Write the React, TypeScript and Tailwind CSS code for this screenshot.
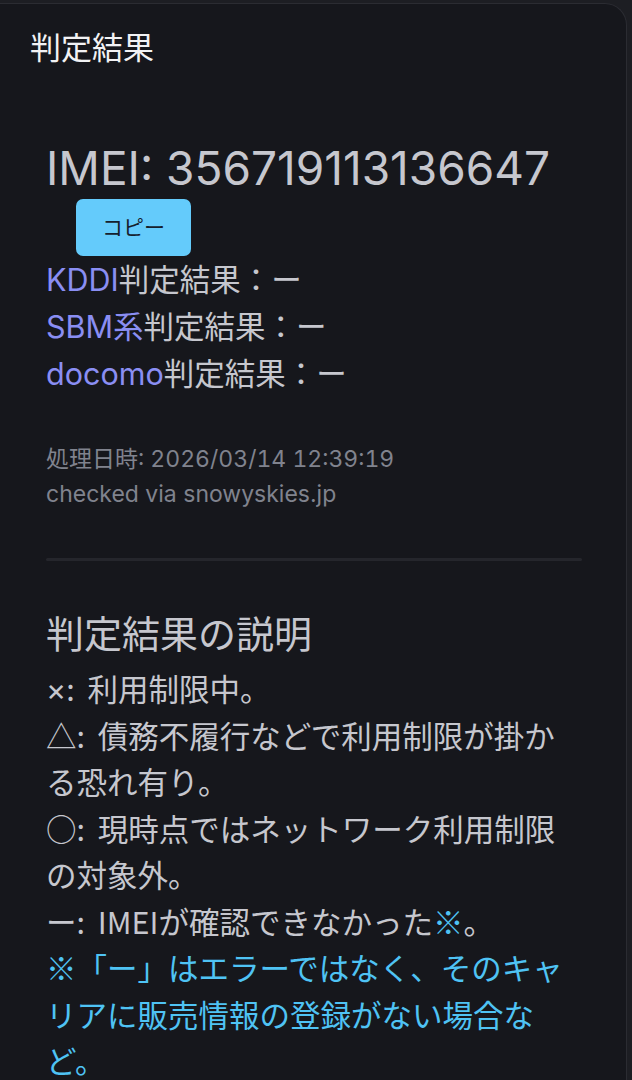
const cjk = { fontFamily: '"Noto Sans CJK JP", sans-serif' };
const latin = { fontFamily: 'Inter, "Noto Sans CJK JP", sans-serif' };

function Mark({ s, narrow = false }: { s: string; narrow?: boolean }) {
  // 記号 + コロン
  return (
    <span className="pr-[6px]">
      {narrow ? (
        <span className="leading-none" style={latin}>{s}</span>
      ) : (
        s
      )}
      :{' '}
    </span>
  );
}

export default function App() {
  return (
    <div className="min-h-screen bg-[#1d1e23] pt-[3px] pr-[5px] overflow-hidden" style={latin}>
      <div className="min-h-[1077px] bg-[#16171c] rounded-tr-[22px] border-t border-r border-[#2b2c32]">
        {/* タイトル */}
        <div className="pl-[30px] pt-[21px] text-[31px] leading-[45px] text-[#f2f2f4]">判定結果</div>

        <div className="px-[46px]">
          <div className="mt-[71px] text-[46px] leading-[55px] text-[#c6c7ce]">IMEI: 356719113136647</div>
          <button className="mt-[3px] ml-[30px] w-[115px] h-[57px] rounded-[7px] bg-[#64cbfb] text-[21px] text-[#15202d]">
            コピー
          </button>

          <div className="text-[30.5px] leading-[47px] text-[#c6c7ce]">
            <div><span className="text-[#8a8ef3]">KDDI</span>判定結果：ー</div>
            <div><span className="text-[#8a8ef3]">SBM系</span>判定結果：ー</div>
            <div><span className="text-[#8a8ef3]">docomo</span>判定結果：ー</div>
          </div>

          <div className="mt-[45px] text-[23px] leading-[35px] text-[#80838e]">
            <div className="tabular-nums">処理日時: 2026/03/14 12:39:19</div>
            <div>checked via snowyskies.jp</div>
          </div>

          <div className="mt-[46px] h-[3px] w-[536px] bg-[#25262c] rounded-full" />

          <h2 className="mt-[47px] text-[38px] leading-[52px] text-[#c6c7ce]">判定結果の説明</h2>
          <div className="mt-[5px] text-[30.5px] leading-[46.5px] text-[#c6c7ce] w-[534px]" style={cjk}>
            <div><Mark s="×" narrow />利用制限中。</div>
            <div><Mark s="△" />債務不履行などで利用制限が掛かる恐れ有り。</div>
            <div><Mark s="○" />現時点ではネットワーク利用制限の対象外。</div>
            <div>
              <Mark s="ー" />IMEIが確認できなかった<span className="text-[#4fc3f4]">※</span>。
            </div>
            <div className="text-[#4fc3f4]">
              ※「ー」はエラーではなく、そのキャリアに販売情報の登録がない場合など。
            </div>
          </div>
        </div>
      </div>
    </div>
  );
}
